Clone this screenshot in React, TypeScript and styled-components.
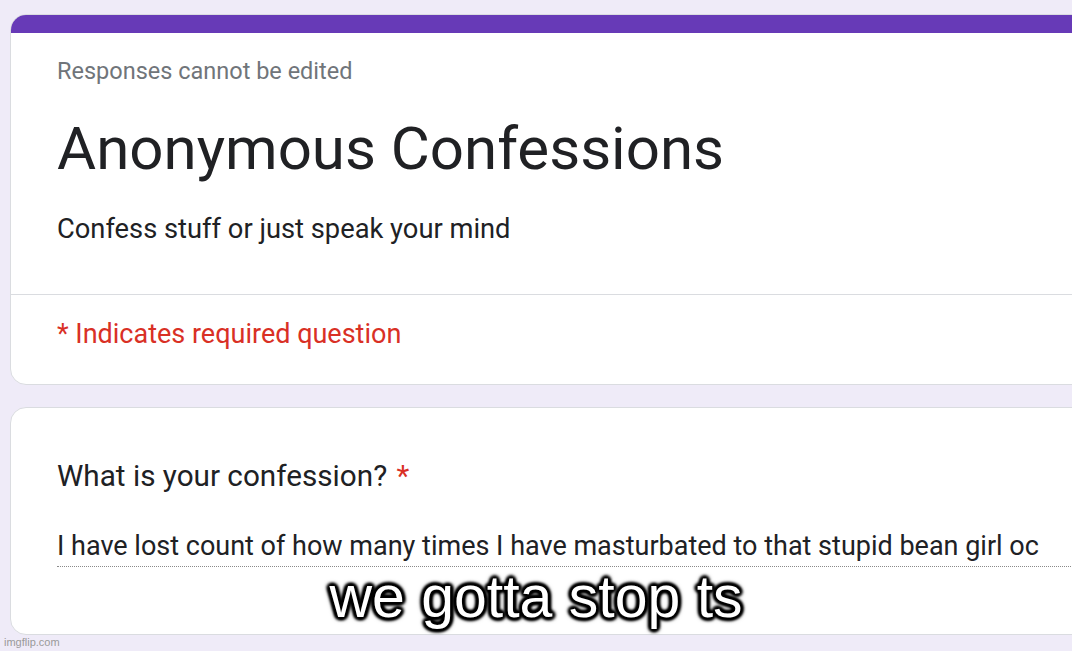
import styled, { createGlobalStyle } from "styled-components";

const GlobalStyle = createGlobalStyle`
    html, body {
        margin: 0;
        padding: 0;
        background: #efebf8;
        overflow: hidden;
    }
    body {
        font-family: Roboto, "Noto Sans", Arial, sans-serif;
        color: #202124;
    }
`;

const Page = styled.div`
    position: relative;
    width: 1072px;
    height: 651px;
    overflow: hidden;
    padding: 14px 0 0 10px;
    box-sizing: border-box;
    display: flex;
    flex-direction: column;
    gap: 22px;
`;

const Card = styled.section`
    background: #ffffff;
    border: 1px solid #dadce0;
    border-radius: 16px;
    margin-right: -40px;
    overflow: hidden;
`;

const HeaderBar = styled.div`
    height: 19px;
    background: #673ab7;
    margin: -1px -1px 0;
`;

const HeaderBody = styled.div`
    padding: 23px 0 48px 46px;
    display: flex;
    flex-direction: column;
`;

const Note = styled.div`
    font-size: 23.5px;
    line-height: 30px;
    color: #70757a;
`;

const Title = styled.h1`
    margin: 28px 0 0;
    font-size: 60px;
    font-weight: 400;
    line-height: 70px;
    color: #202124;
`;

const Description = styled.p`
    margin: 28px 0 0;
    font-size: 27.3px;
    line-height: 34px;
`;

const Divider = styled.hr`
    margin: 0;
    border: none;
    border-top: 1px solid #dadce0;
`;

const Required = styled.div`
    padding: 22px 0 33px 46px;
    font-size: 27px;
    line-height: 34px;
    color: #d93025;
`;

const QuestionBody = styled.div`
    padding: 51px 0 67px 46px;
    display: flex;
    flex-direction: column;
    gap: 36px;
`;

const Question = styled.div`
    font-size: 29.7px;
    line-height: 34px;
`;

const Star = styled.span`
    color: #d93025;
    margin-left: 2px;
`;

const Answer = styled.div`
    font-size: 27px;
    line-height: 34px;
    padding-bottom: 3px;
    border-bottom: 1px dotted #8a8a8a;
    white-space: nowrap;
`;

const Caption = styled.div`
    position: absolute;
    left: 0;
    right: 0;
    top: 567px;
    text-align: center;
    font-family: "Liberation Sans", Arial, sans-serif;
    font-size: 59px;
    line-height: 60px;
    color: #ffffff;
    text-shadow:
        0 0 2px #000, 0 0 3px #000, 0 0 4px #000, 0 0 6px #000,
        2px 2px 3px #000, -2px -2px 3px #000, 2px -2px 3px #000, -2px 2px 3px #000,
        3px 0 3px #000, -3px 0 3px #000, 0 3px 3px #000, 0 -3px 3px #000;
`;

const Watermark = styled.div`
    position: absolute;
    left: 4px;
    bottom: 3px;
    font-family: "Liberation Sans", Arial, sans-serif;
    font-size: 11px;
    color: #9a9a9a;
`;

export default function App() {
    return (
        <>
            <GlobalStyle />
            <Page>
                <Card>
                    <HeaderBar />
                    <HeaderBody>
                        <Note>Responses cannot be edited</Note>
                        <Title>Anonymous Confessions</Title>
                        <Description>Confess stuff or just speak your mind</Description>
                    </HeaderBody>
                    <Divider />
                    <Required>* Indicates required question</Required>
                </Card>
                <Card>
                    <QuestionBody>
                        <Question>
                            What is your confession? <Star>*</Star>
                        </Question>
                        <Answer>I have lost count of how many times I have masturbated to that stupid bean girl oc</Answer>
                    </QuestionBody>
                </Card>
                <Caption>we gotta stop ts</Caption>
                <Watermark>imgflip.com</Watermark>
            </Page>
        </>
    );
}
